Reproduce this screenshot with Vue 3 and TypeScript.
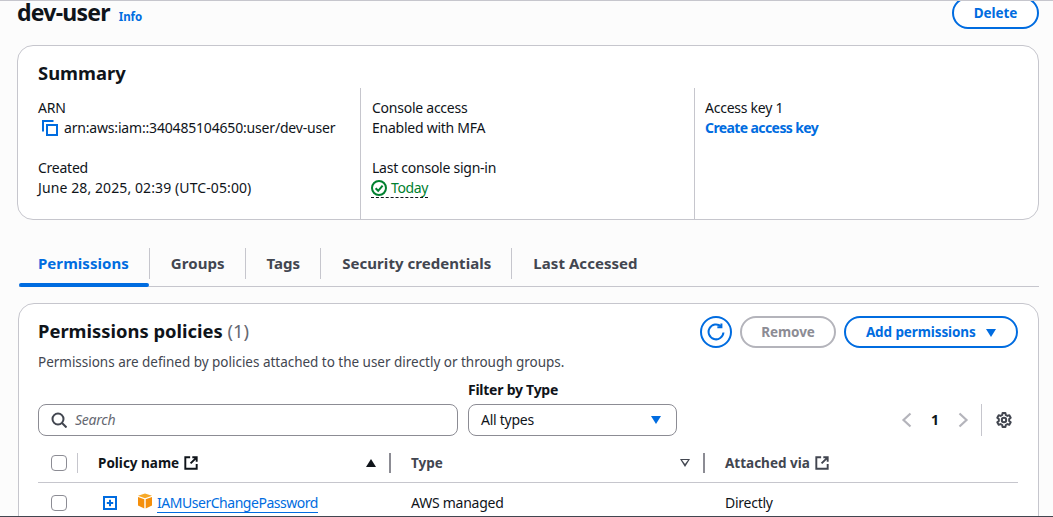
<template>
  <div class="page">
    <header class="page-head">
      <div class="title-wrap">
        <h1>dev-user</h1>
        <a class="info">Info</a>
      </div>
      <button class="btn delete">Delete</button>
    </header>

    <section class="summary">
      <h2>Summary</h2>
      <div class="columns">
        <div class="col first">
          <div class="label">ARN</div>
          <div class="arn">
            <svg class="copy" viewBox="0 0 16 16" width="16" height="16">
              <path d="M1 11.5V1H11.5" />
              <rect x="5" y="5" width="10" height="10" />
            </svg>
            <span>arn:aws:iam::340485104650:user/dev-user</span>
          </div>
          <div class="label spaced">Created</div>
          <div class="label date">June 28, 2025, 02:39 (UTC-05:00)</div>
        </div>
        <div class="col">
          <div class="label">Console access</div>
          <div class="label">Enabled with MFA</div>
          <div class="label spaced">Last console sign-in</div>
          <div class="today">
            <svg viewBox="0 0 16 16" width="16" height="16">
              <circle cx="8" cy="8" r="7" />
              <path d="M4.6 8.2 7.2 10.8 11.6 5.6" />
            </svg>
            <span>Today</span>
          </div>
        </div>
        <div class="col last">
          <div class="label">Access key 1</div>
          <a class="create">Create access key</a>
        </div>
      </div>
    </section>

    <nav class="tabs">
      <div v-for="(tab, i) in tabs" :key="tab" class="tab" :class="{ active: i === 0 }">
        <span>{{ tab }}</span>
      </div>
    </nav>

    <section class="policies">
      <div class="policies-head">
        <div>
          <h2>Permissions policies <span class="count">(1)</span></h2>
          <p class="desc">Permissions are defined by policies attached to the user directly or through groups.</p>
        </div>
        <div class="actions">
          <button class="refresh" aria-label="Refresh">
            <svg viewBox="0 0 16 16" width="18" height="18">
              <path d="M14.6 8.4A6.6 6.6 0 1 1 12.4 3" />
              <path d="M12.8 0.4V3.8H9.2" />
            </svg>
          </button>
          <button class="btn remove">Remove</button>
          <button class="btn add">Add permissions <i class="caret"></i></button>
        </div>
      </div>

      <div class="filters">
        <div class="search">
          <svg viewBox="0 0 16 16" width="16" height="16">
            <circle cx="7" cy="7" r="5.5" />
            <path d="M11 11 15.5 15.5" />
          </svg>
          <span>Search</span>
        </div>
        <div class="filter">
          <label>Filter by Type</label>
          <div class="select">
            <span>All types</span>
            <i class="caret"></i>
          </div>
        </div>
        <div class="pager">
          <svg viewBox="0 0 16 16" width="16" height="16"><path d="M11.5 1.5 4.5 8 11.5 14.5" /></svg>
          <b>1</b>
          <svg viewBox="0 0 16 16" width="16" height="16"><path d="M4.5 1.5 11.5 8 4.5 14.5" /></svg>
          <span class="pager-sep"></span>
          <svg class="gear" viewBox="0 0 16 16" width="16" height="16">
            <path d="M6.6 1H9.4L9.8 3 11.4 3.9 13.3 3.2 14.7 5.7 13.2 7.1V8.9L14.7 10.3 13.3 12.8 11.4 12.1 9.8 13 9.4 15H6.6L6.2 13 4.6 12.1 2.7 12.8 1.3 10.3 2.8 8.9V7.1L1.3 5.7 2.7 3.2 4.6 3.9 6.2 3Z" />
            <circle cx="8" cy="8" r="2.2" />
          </svg>
        </div>
      </div>

      <div class="table">
        <div class="row head">
          <div class="c-check"><span class="checkbox"></span><span class="sep"></span></div>
          <div class="c-name">
            <span class="th">Policy name</span>
            <svg class="ext" viewBox="0 0 16 16" width="14" height="14">
              <path d="M7 1.5H1.5V14.5H14.5V9" />
              <path d="M9.5 1.5H14.5V6.5M14.5 1.5 7.5 8.5" />
            </svg>
            <i class="sort up"></i>
            <span class="sep"></span>
          </div>
          <div class="c-type">
            <span class="th muted">Type</span>
            <i class="sort down"></i>
            <span class="sep"></span>
          </div>
          <div class="c-via">
            <span class="th muted">Attached via</span>
            <svg class="ext grey" viewBox="0 0 16 16" width="14" height="14">
              <path d="M7 1.5H1.5V14.5H14.5V9" />
              <path d="M9.5 1.5H14.5V6.5M14.5 1.5 7.5 8.5" />
            </svg>
          </div>
        </div>
        <div class="row body">
          <div class="c-check"><span class="checkbox"></span></div>
          <div class="c-name">
            <svg class="expand" viewBox="0 0 14 14" width="14" height="14">
              <rect x="1" y="1" width="12" height="12" />
              <path d="M7 3.8V10.2M3.8 7H10.2" />
            </svg>
            <svg class="cube" viewBox="0 0 16 16" width="16" height="16">
              <path class="top" d="M8 0.5 15 2.8 8 5.2 1 2.8Z" />
              <path class="left" d="M1 4V12.6L7.3 15.4V6.2Z" />
              <path class="right" d="M15 4V12.6L8.7 15.4V6.2Z" />
            </svg>
            <a class="policy">IAMUserChangePassword</a>
          </div>
          <div class="c-type">AWS managed</div>
          <div class="c-via">Directly</div>
        </div>
      </div>
    </section>
  </div>
</template>

<script setup lang="ts">
const tabs: string[] = ['Permissions', 'Groups', 'Tags', 'Security credentials', 'Last Accessed']
</script>

<style>
html,
body {
  margin: 0;
  background: #fcfcfc;
}
</style>

<style scoped>
.page {
  box-sizing: border-box;
  width: 1053px;
  height: 517px;
  overflow: hidden;
  padding: 0 14px 0 17px;
  background: #fcfcfc;
  border-top: 1px solid #c6c6cd;
  border-bottom: 1px solid #424650;
  font-family: "Noto Sans", "Open Sans", sans-serif;
  font-size: 14px;
  line-height: 20px;
  letter-spacing: -0.25px;
  color: #0f141a;
}

.page-head {
  display: flex;
  justify-content: space-between;
  height: 44px;
}

.title-wrap {
  display: flex;
  align-items: baseline;
  gap: 9px;
  height: 30px;
}

h1 {
  margin: 0;
  font-size: 23px;
  line-height: 22px;
  font-weight: 700;
  letter-spacing: -0.75px;
}

.info {
  color: #006ce0;
  font-size: 11.5px;
  font-weight: 700;
  letter-spacing: -0.1px;
}

.btn {
  box-sizing: border-box;
  height: 32px;
  border: 2px solid #006ce0;
  border-radius: 20px;
  background: #fff;
  color: #006ce0;
  font-family: inherit;
  font-size: 13.5px;
  font-weight: 700;
  letter-spacing: -0.1px;
  padding: 0;
}

.delete {
  width: 87px;
  margin-top: -4px;
}

h2 {
  margin: 0;
  font-size: 18.4px;
  line-height: 24px;
  font-weight: 700;
  letter-spacing: 0;
}

.summary {
  box-sizing: border-box;
  height: 175px;
  background: #fff;
  border: 1px solid #c6c6cd;
  border-radius: 16px;
  padding: 15px 20px 0;
}

.columns {
  display: grid;
  grid-template-columns: 322px 334px 1fr;
  margin-top: 3px;
}

.col {
  height: 121px;
  padding: 10px 0 0 11px;
  border-left: 1px solid #c6c6cd;
}

.col.first {
  padding-left: 0;
  border-left: 0;
}

.col.last {
  padding-left: 10px;
}

.label {
  height: 20px;
}

.date {
  letter-spacing: 0.1px;
}

.spaced {
  margin-top: 20px;
}

.arn {
  display: flex;
  align-items: center;
  gap: 6px;
  padding-left: 4px;
  letter-spacing: -0.18px;
}

.copy path,
.copy rect {
  fill: none;
  stroke: #006ce0;
  stroke-width: 2;
}

.today {
  display: inline-flex;
  align-items: center;
  gap: 4px;
  margin-left: -1px;
  color: #00802f;
}

.today span {
  border-bottom: 1px dashed #0f141a;
  line-height: 19px;
  margin-left: -20px;
  padding-left: 20px;
  letter-spacing: -0.4px;
}

.today svg {
  position: relative;
  z-index: 1;
}

.today circle,
.today path {
  fill: none;
  stroke: #00802f;
  stroke-width: 2;
}

.create {
  color: #006ce0;
  font-weight: 700;
  letter-spacing: -0.6px;
}

.tabs {
  display: flex;
  height: 39px;
  margin: 27px 0 0 2px;
  border-bottom: 1px solid #c6c6cd;
}

.tab {
  position: relative;
  display: flex;
  align-items: flex-start;
}

.tab span {
  height: 28px;
  margin-top: 1px;
  padding: 3px 20px 0 21px;
  border-left: 1px solid #c6c6cd;
  font-size: 15px;
  line-height: 24px;
  font-weight: 700;
  letter-spacing: 0.05px;
  color: #424650;
}

.tab:first-child span {
  border-left: 0;
  padding-left: 19px;
}

.tab.active span {
  color: #006ce0;
}

.tab.active::after {
  content: "";
  position: absolute;
  left: 0;
  right: 0;
  bottom: -1px;
  height: 4px;
  border-radius: 4px;
  background: #006ce0;
}

.policies {
  box-sizing: border-box;
  height: 260px;
  margin: 16px 0 0 1px;
  padding: 15px 20px 0 19px;
  background: #fff;
  border: 1px solid #c6c6cd;
  border-radius: 16px;
}

.policies-head {
  display: flex;
  justify-content: space-between;
}

.count {
  color: #656871;
  font-weight: 400;
}

.desc {
  margin: 9px 0 0;
  font-size: 13.5px;
  line-height: 20px;
  letter-spacing: -0.02px;
  color: #424650;
}

.actions {
  display: flex;
  gap: 8px;
  align-items: flex-start;
  margin-top: -3px;
}

.refresh {
  display: flex;
  align-items: center;
  justify-content: center;
  box-sizing: border-box;
  width: 32px;
  height: 32px;
  padding: 0;
  border: 2px solid #006ce0;
  border-radius: 50%;
  background: #fff;
}

.refresh path {
  fill: none;
  stroke: #006ce0;
  stroke-width: 1.8;
}

.remove {
  width: 96px;
  border-color: #b4b4bb;
  color: #8c8c94;
}

.add {
  width: 174px;
}

.caret {
  display: inline-block;
  width: 0;
  height: 0;
  margin-left: 7px;
  border-left: 5px solid transparent;
  border-right: 5px solid transparent;
  border-top: 8px solid #006ce0;
}

.filters {
  display: flex;
  align-items: flex-end;
  margin-top: 8px;
}

.search {
  box-sizing: border-box;
  display: flex;
  align-items: center;
  gap: 8px;
  width: 420px;
  height: 32px;
  padding: 0 12px;
  border: 1px solid #8c8c94;
  border-radius: 8px;
  background: #fff;
  color: #656871;
  font-style: italic;
}

.search circle,
.search path {
  fill: none;
  stroke: #424650;
  stroke-width: 2;
}

.filter {
  margin-left: 10px;
}

.filter label {
  display: block;
  font-weight: 700;
  margin-bottom: 4px;
}

.select {
  box-sizing: border-box;
  display: flex;
  align-items: center;
  justify-content: space-between;
  width: 209px;
  height: 32px;
  padding: 0 15px 0 12px;
  border: 1px solid #8c8c94;
  border-radius: 8px;
  background: #fff;
}

.pager {
  display: flex;
  align-items: center;
  height: 32px;
  margin-left: auto;
  margin-right: 6px;
}

.pager svg path {
  fill: none;
  stroke: #b4b4bb;
  stroke-width: 2.2;
}

.pager b {
  width: 40px;
  text-align: center;
  font-size: 14px;
}

.pager-sep {
  width: 1px;
  height: 32px;
  margin: 0 14px 0 10px;
  background: #c6c6cd;
}

.pager svg.gear path,
.pager svg.gear circle {
  fill: none;
  stroke: #424650;
  stroke-width: 2;
  stroke-linejoin: round;
}

.table {
  margin-top: 7px;
}

.row {
  display: grid;
  grid-template-columns: 60px 293px 314px 1fr;
  align-items: center;
}

.row.head {
  height: 39px;
  border-bottom: 1px solid #c6c6cd;
}

.row.body {
  height: 40px;
}

.c-check,
.c-name,
.c-type,
.c-via {
  display: flex;
  align-items: center;
}

.c-check {
  padding-left: 13px;
}

.checkbox {
  box-sizing: border-box;
  width: 16px;
  height: 16px;
  border: 1px solid #8c8c94;
  border-radius: 4px;
  background: #fff;
}

.sep {
  width: 2px;
  height: 20px;
  background: #8c8c94;
}

.head .c-check .sep {
  width: 1px;
  background: #c6c6cd;
  margin-left: 10px;
}

.th {
  font-weight: 700;
  font-size: 13.5px;
  letter-spacing: 0;
}

.th.muted {
  color: #424650;
}

.ext {
  margin-left: 5px;
}

.ext path {
  fill: none;
  stroke: #0f141a;
  stroke-width: 2.2;
}

.ext.grey path {
  stroke: #424650;
}

.sort {
  width: 0;
  height: 0;
  margin-left: auto;
  margin-right: 13px;
  border-left: 5px solid transparent;
  border-right: 5px solid transparent;
}

.sort.up {
  border-bottom: 8px solid #0f141a;
}

.sort.down {
  border-top: 8px solid #424650;
  position: relative;
}

.sort.down::after {
  content: "";
  position: absolute;
  left: -3px;
  top: -7px;
  border-left: 3px solid transparent;
  border-right: 3px solid transparent;
  border-top: 4px solid #fff;
}

.head .c-type {
  padding-left: 20px;
}

.head .c-via {
  padding-left: 20px;
}

.body .c-name {
  padding-left: 5px;
}

.body .c-type {
  padding-left: 20px;
}

.body .c-via {
  padding-left: 20px;
}

.expand rect {
  fill: none;
  stroke: #006ce0;
  stroke-width: 2;
}

.expand path {
  fill: none;
  stroke: #006ce0;
  stroke-width: 2;
}

.cube {
  margin-left: 20px;
  margin-top: -4px;
}

.cube .top {
  fill: #f7a928;
}

.cube .left,
.cube .right {
  fill: #f58f0b;
}

.policy {
  margin-left: 4px;
  color: #006ce0;
  border-bottom: 1px solid #006ce0;
  line-height: 19px;
  letter-spacing: -0.47px;
}
</style>
